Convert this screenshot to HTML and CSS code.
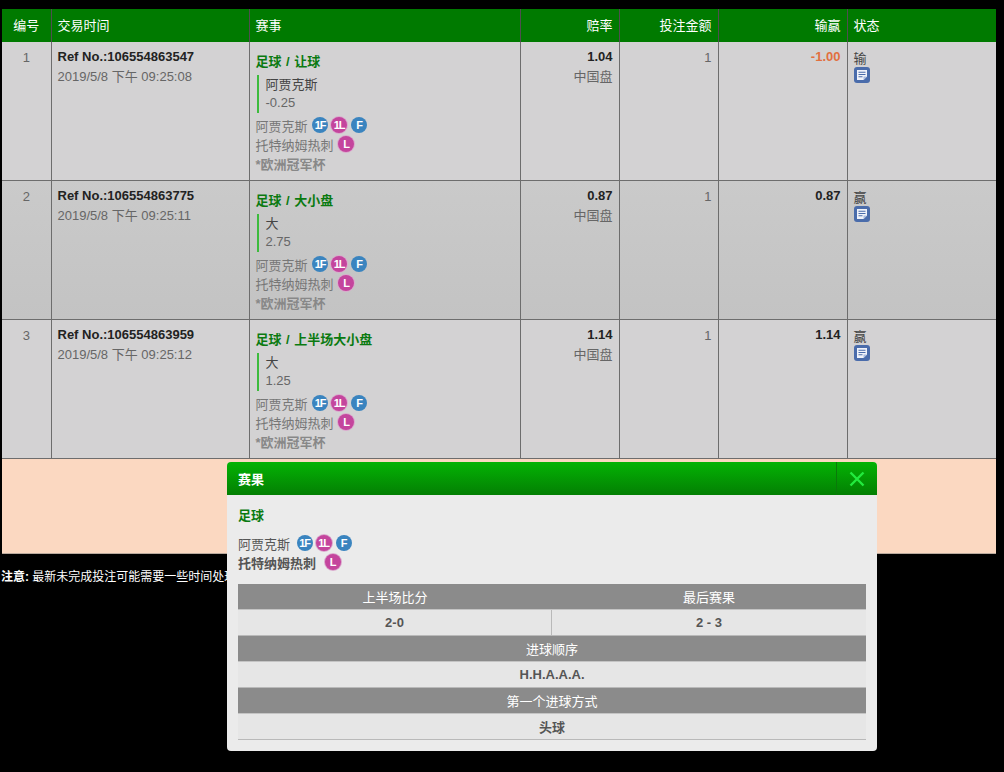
FILE: index.html
```html
<!DOCTYPE html>
<html lang="zh">
<head>
<meta charset="utf-8">
<title>投注记录</title>
<link rel="stylesheet" href="styles.css">
</head>
<body>
<main class="page">
<table class="bets">
<colgroup><col class="c1"><col class="c2"><col class="c3"><col class="c4"><col class="c5"><col class="c6"><col class="c7"></colgroup>
<thead>
<tr><th class="center">编号</th><th>交易时间</th><th>赛事</th><th class="right">赔率</th><th class="right">投注金额</th><th class="right">输赢</th><th>状态</th></tr>
</thead>
<tbody>
<tr>
<td class="center num">1</td>
<td class="stack"><b class="ref">Ref No.:106554863547</b><div class="time">2019/5/8 下午 09:25:08</div></td>
<td class="event"><div class="sport">足球 / 让球</div><div class="pick"><div class="pick-name">阿贾克斯</div><div class="pick-line">-0.25</div></div>
<div class="team">阿贾克斯 <span class="badges"><i class="bd blue">1F</i><i class="bd pink">1L</i><i class="bd blue">F</i></span></div>
<div class="team">托特纳姆热刺 <span class="badges"><i class="bd pink">L</i></span></div>
<div class="league">*欧洲冠军杯</div></td>
<td class="right stack"><b class="odds">1.04</b><div class="market">中国盘</div></td>
<td class="right num">1</td>
<td class="right stack"><b class="loss">-1.00</b></td>
<td class="status"><div class="state">输</div><svg class="note" viewBox="0 0 16 16"><use href="#note"/></svg></td>
</tr>
<tr>
<td class="center num">2</td>
<td class="stack"><b class="ref">Ref No.:106554863775</b><div class="time">2019/5/8 下午 09:25:11</div></td>
<td class="event"><div class="sport">足球 / 大小盘</div><div class="pick"><div class="pick-name">大</div><div class="pick-line">2.75</div></div>
<div class="team">阿贾克斯 <span class="badges"><i class="bd blue">1F</i><i class="bd pink">1L</i><i class="bd blue">F</i></span></div>
<div class="team">托特纳姆热刺 <span class="badges"><i class="bd pink">L</i></span></div>
<div class="league">*欧洲冠军杯</div></td>
<td class="right stack"><b class="odds">0.87</b><div class="market">中国盘</div></td>
<td class="right num">1</td>
<td class="right stack"><b class="odds">0.87</b></td>
<td class="status"><div class="state">赢</div><svg class="note" viewBox="0 0 16 16"><use href="#note"/></svg></td>
</tr>
<tr>
<td class="center num">3</td>
<td class="stack"><b class="ref">Ref No.:106554863959</b><div class="time">2019/5/8 下午 09:25:12</div></td>
<td class="event"><div class="sport">足球 / 上半场大小盘</div><div class="pick"><div class="pick-name">大</div><div class="pick-line">1.25</div></div>
<div class="team">阿贾克斯 <span class="badges"><i class="bd blue">1F</i><i class="bd pink">1L</i><i class="bd blue">F</i></span></div>
<div class="team">托特纳姆热刺 <span class="badges"><i class="bd pink">L</i></span></div>
<div class="league">*欧洲冠军杯</div></td>
<td class="right stack"><b class="odds">1.14</b><div class="market">中国盘</div></td>
<td class="right num">1</td>
<td class="right stack"><b class="odds">1.14</b></td>
<td class="status"><div class="state">赢</div><svg class="note" viewBox="0 0 16 16"><use href="#note"/></svg></td>
</tr>
</tbody>
</table>
<div class="summary"></div>
<p class="notice"><b>注意:</b> 最新未完成投注可能需要一些时间处理</p>
</main>

<section class="modal">
<header class="modal-head"><h2>赛果</h2><div class="close"><svg viewBox="0 0 16 16" width="16" height="16"><path d="M1.5 1.5 14.5 14.5M14.5 1.5 1.5 14.5" stroke="#22ea3e" stroke-width="2.4" fill="none"/></svg></div></header>
<div class="modal-body">
<div class="sport m-sport">足球</div>
<div class="m-team">阿贾克斯 <span class="badges gap"><i class="bd blue">1F</i><i class="bd pink">1L</i><i class="bd blue">F</i></span></div>
<div class="m-team strong">托特纳姆热刺 <span class="badges gap"><i class="bd pink">L</i></span></div>
<table class="result">
<tr><th>上半场比分</th><th>最后赛果</th></tr>
<tr><td class="split">2-0</td><td>2 - 3</td></tr>
<tr><th colspan="2">进球顺序</th></tr>
<tr><td colspan="2">H.H.A.A.A.</td></tr>
<tr><th colspan="2">第一个进球方式</th></tr>
<tr><td colspan="2">头球</td></tr>
</table>
</div>
</section>

<svg class="defs" width="0" height="0" aria-hidden="true"><defs><g id="note"><rect width="16" height="16" rx="3" fill="#4a6cab"/><path d="M3 3h10v6.5L9.5 13H3z" fill="#f0f3fa"/><path d="M4.5 5.2h7M4.5 7.5h7M4.5 9.8h4" stroke="#4a6cab" stroke-width="1.1"/><path d="M9.5 13V9.5H13z" fill="#a9bbdc"/></g></defs></svg>
</body>
</html>
```
FILE: styles.css
```css
html, body { margin: 0; background: #000; height: 772px; overflow: hidden; }
body { font: 13px "Liberation Sans", "Noto Sans CJK SC", sans-serif; color: #666; position: relative; }
.page { padding: 9px 8px 0 2px; }
.bets { width: 994px; border-collapse: collapse; table-layout: fixed; }
.c1 { width: 49px; } .c2 { width: 198px; } .c3 { width: 271px; } .c4 { width: 99px; } .c5 { width: 99px; } .c6 { width: 129px; } .c7 { width: auto; }
.bets thead tr { height: 33px; background: #007a00; }
.bets th { color: #fff; font-weight: normal; text-align: left; padding: 0 6px 2px; border-left: 1px solid #4f4f4f; }
.bets th:first-child, .bets td:first-child { border-left: 0; }
.bets tbody tr { height: 139px; background: #d3d2d3; }
.bets tbody tr:first-child { height: 138px; }
.bets tbody tr:nth-child(2) { background: linear-gradient(#cacaca, #c3c3c3); }
.bets td { vertical-align: top; padding: 6px 6px 0; border-left: 1px solid #6d6d6d; border-bottom: 1px solid #6d6d6d; line-height: 19px; overflow: hidden; }
.bets th.right, .bets td.right { text-align: right; }
.bets th.center, .bets td.center { text-align: center; }
.ref, .odds { color: #222; }
.bets td.stack { padding-top: 5px; }
.time, .market { margin-top: 1px; }
.bets td.event { padding-top: 11px; }
.sport { font-weight: bold; color: #0a7a10; line-height: 18px; word-spacing: 1px; }
.pick { border-left: 2px solid #3dbb3d; margin: 4px 0 4px 1px; padding: 1px 0 1px 7px; line-height: 18px; }
.pick-name { color: #444; }
.team { color: #777; line-height: 19px; }
.league { color: #888; font-weight: bold; line-height: 20px; }
.badges { display: inline-flex; gap: 3px; vertical-align: 2px; margin-left: 1px; }
.badges.gap { margin-left: 3px; }
.strong .badges.gap { margin-left: 5px; }
.bd { width: 16px; height: 16px; border-radius: 50%; color: #fff; font: bold 11px/16px "Liberation Sans", sans-serif; text-align: center; letter-spacing: -1px; }
.blue { background: #3a84bf; }
.pink { background: #c4459d; box-shadow: 0 0 0 1px #dba9cd; }
.pink + .blue { margin-left: 1px; }
.market { color: #666; }
.loss { color: #e2703f; }
.status { color: #444; }
.state { position: relative; top: 1px; height: 19px; }
.note { display: block; width: 16px; height: 16px; }
.summary { width: 994px; height: 95px; background: #fbd8c1; border-bottom: 1px solid #b9a99d; box-sizing: border-box; }
.notice { margin: 14px 0 0; color: #fff; line-height: 18px; font-size: 12px; margin-left: -1px; }
.modal { position: absolute; left: 227px; top: 462px; width: 650px; height: 289px; background: #ebebeb; border-radius: 4px; overflow: hidden; }
.modal-head { height: 33px; background: linear-gradient(#04b304, #037f03); display: flex; align-items: center; justify-content: space-between; }
.modal-head h2 { margin: 0 0 0 11px; font-size: 13px; color: #fff; font-weight: bold; }
.close { width: 40px; height: 33px; border-left: 1px solid #0a7a0a; display: flex; align-items: center; justify-content: center; }
.modal-body { padding: 12px 11px 0; }
.m-sport { line-height: 18px; }
.m-team { color: #555; line-height: 19px; }
.m-sport + .m-team { margin-top: 10px; }
.m-team.strong { font-weight: bold; }
.result { width: 628px; border-collapse: separate; border-spacing: 0; table-layout: fixed; margin-top: 11px; }
.result th { box-sizing: border-box; height: 26px; padding: 0 0 1px; background: #8b8b8b; color: #fff; font-weight: normal; border-bottom: 1px solid #c4c4c4; }
.result td { box-sizing: border-box; height: 26px; padding: 0 0 1px; background: #e6e6e6; color: #555; text-align: center; font-weight: bold; border-bottom: 1px solid #b9b9b9; }
.result td.split { border-right: 1px solid #b9b9b9; }
.defs { position: absolute; }
```
